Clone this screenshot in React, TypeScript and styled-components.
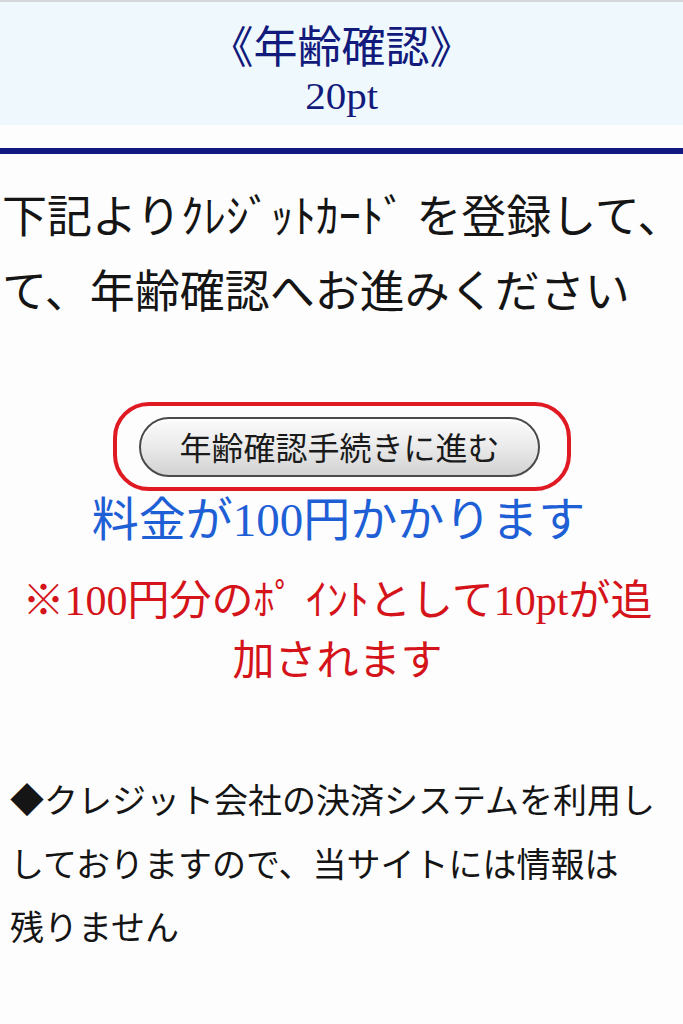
import React from "react";
import styled, { createGlobalStyle } from "styled-components";

const GlobalStyle = createGlobalStyle`
  html, body {
    margin: 0;
    padding: 0;
    background: #ffffff;
  }
  body {
    font-family: "Liberation Serif", "Noto Sans CJK JP", serif;
    color: #111;
  }
`;

const Page = styled.div`
  width: 683px;
  min-height: 1024px;
  background: #fdfdfd;
  border-top: 2px solid #d4d8da;
  box-sizing: border-box;
`;

const Header = styled.header`
  height: 123px;
  background: #eff9fd;
  display: flex;
  flex-direction: column;
  align-items: center;
  color: #121a7c;
`;

const Title = styled.h1`
  margin: 0;
  padding-top: 13px;
  font-size: 44px;
  line-height: 58px;
  font-weight: 400;
  font-family: "Noto Sans CJK JP", sans-serif;
`;

const Points = styled.div`
  font-size: 38px;
  line-height: 46px;
  font-family: "Liberation Serif", serif;
  transform: scaleX(1.08);
`;

const Rule = styled.hr`
  margin: 23px 0 0;
  border: none;
  height: 6px;
  background: #121a80;
`;

const Lead = styled.p`
  margin: 22px 0 0;
  padding-left: 2px;
  font-size: 45px;
  line-height: 75px;
  font-family: "Noto Sans CJK JP", sans-serif;
  color: #151515;
  white-space: nowrap;
`;

const ButtonFrame = styled.div`
  margin: 76px auto 0;
  width: 458px;
  height: 89px;
  box-sizing: border-box;
  border: 4px solid #e01a22;
  border-radius: 36px;
  display: flex;
  align-items: center;
  justify-content: center;
  padding-right: 4px;
`;

const ProceedButton = styled.button`
  width: 401px;
  height: 60px;
  border-radius: 30px;
  border: 2px solid #4a4a4a;
  background: linear-gradient(#fbfbfb 0%, #ececec 45%, #d2d2d2 100%);
  box-shadow: inset 0 2px 2px rgba(255, 255, 255, 0.9);
  font-family: "Noto Sans CJK JP", sans-serif;
  font-size: 32px;
  color: #1a1a1a;
  padding: 0 0 2px;
  cursor: pointer;
`;

const Notice = styled.p<{ $color: string; $size: number; $lh: number }>`
  margin: 0;
  text-align: center;
  color: ${(p) => p.$color};
  font-size: ${(p) => p.$size}px;
  line-height: ${(p) => p.$lh}px;
  white-space: nowrap;
`;

const Fee = styled(Notice)`
  margin-top: 4px;
  padding-right: 6px;
`;

const Bonus = styled(Notice)`
  margin-top: 26px;
  padding-right: 8px;
`;

const Info = styled.p`
  margin: 76px 0 0;
  padding-left: 10px;
  font-family: "Noto Sans CJK JP", sans-serif;
  font-size: 34px;
  line-height: 63.5px;
  color: #151515;
  white-space: nowrap;
`;

export default function App() {
  return (
    <>
      <GlobalStyle />
      <Page>
        <Header>
          <Title>《年齢確認》</Title>
          <Points>20pt</Points>
        </Header>
        <Rule />
        <Lead>
          下記よりｸﾚｼﾞｯﾄｶｰﾄﾞ を登録して、
          <br />
          て、年齢確認へお進みください
        </Lead>
        <ButtonFrame>
          <ProceedButton type="button">年齢確認手続きに進む</ProceedButton>
        </ButtonFrame>
        <Fee $color="#1f5fd6" $size={47} $lh={50}>
          料金が100円かかります
        </Fee>
        <Bonus $color="#d4141a" $size={42} $lh={60}>
          ※100円分のﾎﾟ ｲﾝﾄとして10ptが追
          <br />
          加されます
        </Bonus>
        <Info>
          ◆クレジット会社の決済システムを利用し
          <br />
          しておりますので、当サイトには情報は
          <br />
          残りません
        </Info>
      </Page>
    </>
  );
}
